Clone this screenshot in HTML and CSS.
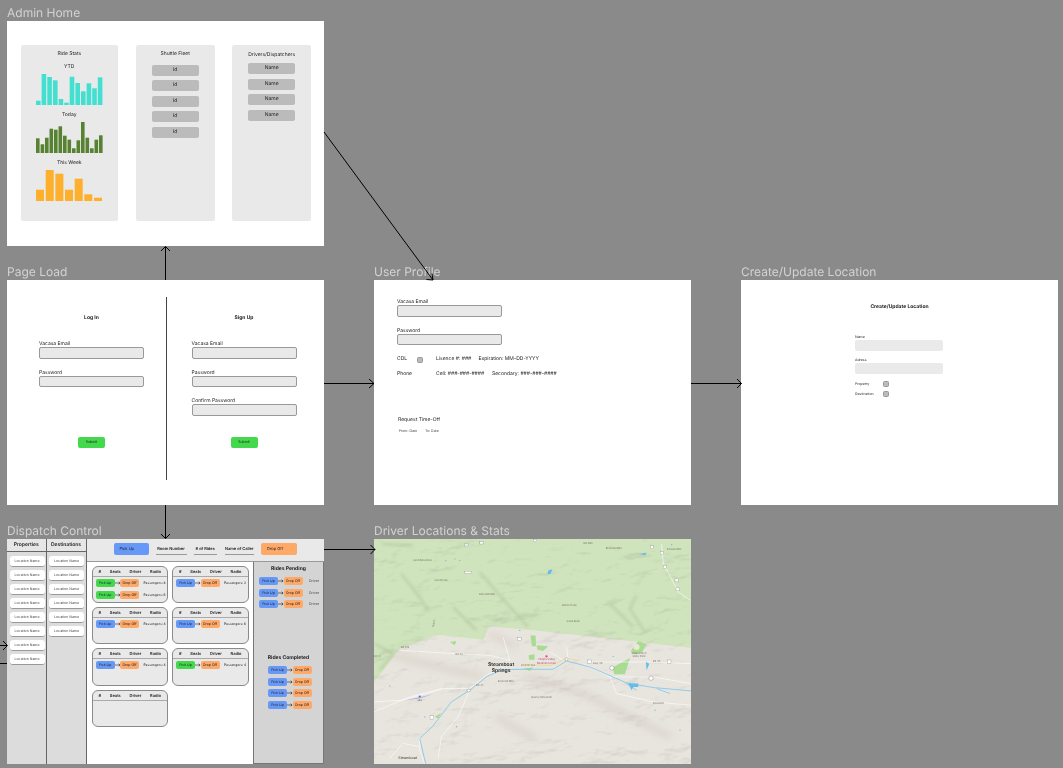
FILE: index.html
```html
<!DOCTYPE html>
<html lang="en">
<head>
    <meta charset="UTF-8">
    <meta name="viewport" content="width=device-width, initial-scale=1.0">
    <title>Shuttle Dispatch Wireframes</title>
    <link rel="stylesheet" href="styles.css">
</head>
<body>
    <svg class="defs" width="0" height="0">
        <symbol id="ride-arrow" viewBox="0 0 6 4">
            <path d="M0 2H5.6M4 .6L5.6 2L4 3.4" fill="none" stroke="#111" stroke-width=".6"/>
        </symbol>
    </svg>

    <!-- Admin Home -->
    <section class="board board-admin">
        <h2 class="board-title">Admin Home</h2>
        <div class="frame admin">
            <div class="panel panel-stats">
                <h3 class="panel-title">Ride Stats</h3>
                <p class="stat-label">YTD</p>
                <svg class="chart chart-ytd" viewBox="0 0 67 31">
                    <rect x="0" y="26.700" width="4.600" height="4.300"/><rect x="5.600" y="0" width="4.600" height="31"/><rect x="11.300" y="3" width="4.600" height="28"/><rect x="17" y="6.300" width="4.600" height="24.700"/><rect x="22.600" y="25" width="4.600" height="6"/><rect x="28.200" y="28.700" width="4.600" height="2.300"/><rect x="33.700" y="2.700" width="4.600" height="28.300"/><rect x="39.400" y="9" width="4.600" height="22"/><rect x="45" y="17.300" width="4.600" height="13.700"/><rect x="50.600" y="9.300" width="4.600" height="21.700"/><rect x="56.200" y="14.300" width="4.600" height="16.700"/><rect x="61.800" y="3.300" width="4.600" height="27.700"/>
                </svg>
                <p class="stat-label">Today</p>
                <svg class="chart chart-today" viewBox="0 0 67 31">
                    <rect x="0" y="16.300" width="3.600" height="14.700"/><rect x="4.600" y="22.300" width="3.600" height="8.700"/><rect x="9" y="15.700" width="3.600" height="15.300"/><rect x="13.500" y="6.700" width="3.600" height="24.300"/><rect x="18" y="7.700" width="3.600" height="23.300"/><rect x="22.500" y="4.300" width="3.600" height="26.700"/><rect x="27" y="13.700" width="3.600" height="17.300"/><rect x="31.500" y="17.700" width="3.600" height="13.300"/><rect x="36" y="26.300" width="3.600" height="4.700"/><rect x="40.500" y="18.300" width="3.600" height="12.700"/><rect x="45" y="0" width="3.600" height="31"/><rect x="49.500" y="15.700" width="3.600" height="15.300"/><rect x="54" y="26.300" width="3.600" height="4.700"/><rect x="58.500" y="17.700" width="3.600" height="13.300"/><rect x="63" y="13.300" width="3.600" height="17.700"/>
                </svg>
                <p class="stat-label">This Week</p>
                <svg class="chart chart-week" viewBox="0 0 67 31">
                    <rect x="0" y="19.700" width="8" height="11.300"/><rect x="9.700" y="0" width="8" height="31"/><rect x="19.400" y="3.700" width="8" height="27.300"/><rect x="29" y="19.700" width="8" height="11.300"/><rect x="38.700" y="8.700" width="8" height="22.300"/><rect x="48.300" y="24.300" width="8" height="6.700"/><rect x="58" y="27.700" width="8" height="3.300"/>
                </svg>
            </div>
            <div class="panel panel-fleet">
                <h3 class="panel-title">Shuttle Fleet</h3>
                <div class="chip-list fleet-list">
                    <span class="chip">Id</span>
                    <span class="chip">Id</span>
                    <span class="chip">Id</span>
                    <span class="chip">Id</span>
                    <span class="chip">Id</span>
                </div>
            </div>
            <div class="panel panel-drivers">
                <h3 class="panel-title">Drivers/Dispatchers</h3>
                <div class="chip-list">
                    <span class="chip">Name</span>
                    <span class="chip">Name</span>
                    <span class="chip">Name</span>
                    <span class="chip">Name</span>
                </div>
            </div>
        </div>
    </section>

    <!-- Page Load -->
    <section class="board board-load">
        <h2 class="board-title">Page Load</h2>
        <div class="frame auth">
            <div class="auth-col auth-login">
                <h3 class="form-title">Log In</h3>
                <label class="field-label">Vacasa Email</label>
                <div class="input"></div>
                <label class="field-label">Password</label>
                <div class="input"></div>
                <button class="submit">Submit</button>
            </div>
            <div class="auth-divider"></div>
            <div class="auth-col auth-signup">
                <h3 class="form-title">Sign Up</h3>
                <label class="field-label">Vacasa Email</label>
                <div class="input"></div>
                <label class="field-label">Password</label>
                <div class="input"></div>
                <label class="field-label">Confirm Password</label>
                <div class="input"></div>
                <button class="submit">Submit</button>
            </div>
        </div>
    </section>

    <!-- User Profile -->
    <section class="board board-profile">
        <h2 class="board-title">User Profile</h2>
        <div class="frame profile">
            <label class="field-label">Vacasa Email</label>
            <div class="input"></div>
            <label class="field-label">Password</label>
            <div class="input"></div>
            <div class="profile-row row-cdl">
                <span class="cell-cdl">CDL</span>
                <span class="checkbox"></span>
                <span class="cell-licence">Lisence #: ###</span>
                <span>Expiration: MM-DD-YYYY</span>
            </div>
            <div class="profile-row row-phone">
                <span class="cell-phone">Phone</span>
                <span class="cell-cell">Cell: ###-###-####</span>
                <span>Secondary: ###-###-####</span>
            </div>
            <p class="timeoff-title">Request Time-Off</p>
            <p class="timeoff-dates"><span>From: Date</span><span>To: Date</span></p>
        </div>
    </section>

    <!-- Create/Update Location -->
    <section class="board board-location">
        <h2 class="board-title">Create/Update Location</h2>
        <div class="frame location">
            <h3 class="form-title">Create/Update Location</h3>
            <div class="location-form">
                <label class="small-label">Name</label>
                <div class="input-plain"></div>
                <label class="small-label">Adress</label>
                <div class="input-plain"></div>
                <div class="check-row check-first"><span>Property</span><span class="checkbox"></span></div>
                <div class="check-row"><span>Destination</span><span class="checkbox"></span></div>
            </div>
        </div>
    </section>

    <!-- Dispatch Control -->
    <section class="board board-dispatch">
        <h2 class="board-title">Dispatch Control</h2>
        <div class="frame dispatch">
            <div class="loc-col">
                <h3 class="loc-head">Properties</h3>
                <div class="loc-list">
                    <span class="loc">Location Name</span>
                    <span class="loc">Location Name</span>
                    <span class="loc">Location Name</span>
                    <span class="loc">Location Name</span>
                    <span class="loc">Location Name</span>
                    <span class="loc">Location Name</span>
                    <span class="loc">Location Name</span>
                    <span class="loc">Location Name</span>
                </div>
            </div>
            <div class="loc-col loc-col-dest">
                <h3 class="loc-head">Destinations</h3>
                <div class="loc-list">
                    <span class="loc">Location Name</span>
                    <span class="loc">Location Name</span>
                    <span class="loc">Location Name</span>
                    <span class="loc">Location Name</span>
                    <span class="loc">Location Name</span>
                    <span class="loc">Location Name</span>
                </div>
            </div>
            <div class="dispatch-main">
                <div class="topbar">
                    <span class="btn-big btn-blue">Pick Up</span>
                    <span class="top-field field-room">Room Number</span>
                    <span class="top-field field-rides"># of Rides</span>
                    <span class="top-field field-caller">Name of Caller</span>
                    <span class="btn-big btn-orange">Drop Off</span>
                </div>
                <div class="dispatch-body">
                    <div class="cards">
                        <div class="card">
                            <div class="card-head"><span>#</span><span>Seats</span><span>Driver</span><span>Radio</span></div>
                            <div class="ride"><span class="pill pill-green">Pick Up</span><svg class="arrow"><use href="#ride-arrow"/></svg><span class="pill pill-orange">Drop Off</span><span class="ride-note">Passengers: 8</span></div>
                            <div class="ride"><span class="pill pill-green">Pick Up</span><svg class="arrow"><use href="#ride-arrow"/></svg><span class="pill pill-orange">Drop Off</span><span class="ride-note">Passengers: 6</span></div>
                        </div>
                        <div class="card">
                            <div class="card-head"><span>#</span><span>Seats</span><span>Driver</span><span>Radio</span></div>
                            <div class="ride"><span class="pill pill-blue">Pick Up</span><svg class="arrow"><use href="#ride-arrow"/></svg><span class="pill pill-orange">Drop Off</span><span class="ride-note">Passengers: 4</span></div>
                        </div>
                        <div class="card">
                            <div class="card-head"><span>#</span><span>Seats</span><span>Driver</span><span>Radio</span></div>
                            <div class="ride"><span class="pill pill-blue">Pick Up</span><svg class="arrow"><use href="#ride-arrow"/></svg><span class="pill pill-orange">Drop Off</span><span class="ride-note">Passengers: 4</span></div>
                        </div>
                        <div class="card">
                            <div class="card-head"><span>#</span><span>Seats</span><span>Driver</span><span>Radio</span></div>
                        </div>
                        <div class="card">
                            <div class="card-head"><span>#</span><span>Seats</span><span>Driver</span><span>Radio</span></div>
                            <div class="ride"><span class="pill pill-blue">Pick Up</span><svg class="arrow"><use href="#ride-arrow"/></svg><span class="pill pill-orange">Drop Off</span><span class="ride-note">Passengers: 2</span></div>
                        </div>
                        <div class="card">
                            <div class="card-head"><span>#</span><span>Seats</span><span>Driver</span><span>Radio</span></div>
                            <div class="ride"><span class="pill pill-blue">Pick Up</span><svg class="arrow"><use href="#ride-arrow"/></svg><span class="pill pill-orange">Drop Off</span><span class="ride-note">Passengers: 6</span></div>
                        </div>
                        <div class="card">
                            <div class="card-head"><span>#</span><span>Seats</span><span>Driver</span><span>Radio</span></div>
                            <div class="ride"><span class="pill pill-green">Pick Up</span><svg class="arrow"><use href="#ride-arrow"/></svg><span class="pill pill-orange">Drop Off</span><span class="ride-note">Passengers: 4</span></div>
                        </div>
                    </div>
                    <aside class="rides-side">
                        <h3 class="side-title">Rides Pending</h3>
                        <div class="side-list side-pending">
                            <div class="ride"><span class="pill pill-blue">Pick Up</span><svg class="arrow"><use href="#ride-arrow"/></svg><span class="pill pill-orange">Drop Off</span><span class="ride-driver">Driver</span></div>
                            <div class="ride"><span class="pill pill-blue">Pick Up</span><svg class="arrow"><use href="#ride-arrow"/></svg><span class="pill pill-orange">Drop Off</span><span class="ride-driver">Driver</span></div>
                            <div class="ride"><span class="pill pill-blue">Pick Up</span><svg class="arrow"><use href="#ride-arrow"/></svg><span class="pill pill-orange">Drop Off</span><span class="ride-driver">Driver</span></div>
                        </div>
                        <h3 class="side-title side-title-done">Rides Completed</h3>
                        <div class="side-list side-done">
                            <div class="ride"><span class="pill pill-blue">Pick Up</span><svg class="arrow"><use href="#ride-arrow"/></svg><span class="pill pill-orange">Drop Off</span></div>
                            <div class="ride"><span class="pill pill-blue">Pick Up</span><svg class="arrow"><use href="#ride-arrow"/></svg><span class="pill pill-orange">Drop Off</span></div>
                            <div class="ride"><span class="pill pill-blue">Pick Up</span><svg class="arrow"><use href="#ride-arrow"/></svg><span class="pill pill-orange">Drop Off</span></div>
                            <div class="ride"><span class="pill pill-blue">Pick Up</span><svg class="arrow"><use href="#ride-arrow"/></svg><span class="pill pill-orange">Drop Off</span></div>
                        </div>
                    </aside>
                </div>
            </div>
        </div>
    </section>

    <!-- Driver Locations & Stats -->
    <section class="board board-map">
        <h2 class="board-title">Driver Locations &amp; Stats</h2>
        <div class="frame map">
            <svg class="map-svg" viewBox="13 55 950 677" preserveAspectRatio="none">
                <defs>
                    <filter id="blur3"><feGaussianBlur stdDeviation="5"/></filter>
                    <filter id="blur8"><feGaussianBlur stdDeviation="12"/></filter>
                    <filter id="soft"><feGaussianBlur stdDeviation=".8"/></filter>
                    <filter id="hills" x="0" y="0" width="100%" height="100%">
                        <feTurbulence type="fractalNoise" baseFrequency="0.007 0.014" numOctaves="4" seed="7"/>
                        <feDiffuseLighting surfaceScale="14" lighting-color="#fff" diffuseConstant="1.2">
                            <feDistantLight azimuth="225" elevation="62"/>
                        </feDiffuseLighting>
                    </filter>
                </defs>
                <rect x="13" y="55" width="950" height="677" fill="#cfe3bd"/>
                <path d="M13 485L90 385L205 343L340 358L358 318L500 330L963 382V732H13Z" fill="#e8e4de"/>
                <rect class="map-hills" x="13" y="55" width="950" height="677" filter="url(#hills)"/>
                <g filter="url(#blur3)" fill="none" stroke="#b0c396" stroke-width="7" opacity=".6">
                    <path d="M330 155L390 225L475 320"/>
                    <path d="M95 160L150 230L175 270"/>
                    <path d="M40 70L130 75"/>
                    <path d="M800 225L780 265L825 335"/>
                    <path d="M250 260L320 330"/>
                    <path d="M15 370L70 400L30 450"/>
                    <path d="M720 250L790 320"/>
                </g>
                <g filter="url(#blur8)" fill="none" stroke="#c9c1b3" stroke-width="14" opacity=".55">
                    <path d="M70 405L250 450L340 470"/>
                    <path d="M470 470L640 520L780 590L900 650"/>
                    <path d="M360 340L440 380"/>
                    <path d="M380 590L500 660"/>
                </g>
                <g filter="url(#soft)">
                    <!-- parks -->
                    <g fill="#a9dc92">
                        <path d="M728 442L780 413L765 462L733 462Z"/>
                        <path d="M782 392L805 362L830 372L815 398L790 402Z"/>
                        <path d="M482 345H497L499 378H486Z"/>
                        <path d="M476 405L494 402L494 418L478 418Z"/>
                        <path d="M500 375L535 378L520 392L503 388Z"/>
                        <path d="M460 445L490 442L480 452Z"/>
                        <path d="M195 590L215 578L205 595Z"/>
                        <path d="M240 365L260 362L255 375Z"/>
                    </g>
                    <circle cx="800" cy="380" r="9" fill="#e8ead8"/>
                    <!-- roads -->
                    <g fill="none" stroke="#fff" stroke-width="1.800">
                        <path d="M13 575L120 530L220 505L300 505L350 465L400 440"/>
                        <path d="M300 510L265 590L215 650L205 715"/>
                        <path d="M90 390L260 400L360 405L420 420"/>
                        <path d="M650 425L840 425L963 430"/>
                        <path d="M640 430L720 470L850 470L963 490"/>
                        <path d="M720 470L740 520L850 545L963 555"/>
                        <path d="M15 545L100 540L220 505"/>
                        <path d="M150 650L150 690L165 732"/>
                        <path d="M60 715L100 670L150 680"/>
                        <path d="M875 70L880 130L905 175L925 215L963 240"/>
                        <path d="M400 350L420 420M590 380L595 420M540 395L580 420"/>
                    </g>
                    <path d="M455 432L540 436L590 415L630 420" fill="none" stroke="#f2d88c" stroke-width="2.500"/>
                    <!-- water -->
                    <g fill="none" stroke="#7cc8ee" stroke-width="2.500">
                        <path d="M168 732L150 655L188 620L245 545L300 510L352 468L400 448L470 447L550 447L590 422L660 440L770 488L850 502L963 512"/>
                        <path d="M770 490L800 510M860 505L900 520"/>
                    </g>
                    <g fill="#62bcec">
                        <path d="M535 150L548 146L542 160L533 160Z"/>
                        <path d="M775 490H805V500H790L785 510Z"/>
                        <path d="M808 100L830 96L826 104Z"/>
                        <path d="M828 425L838 430L830 450Z"/>
                        <circle cx="255" cy="115" r="2"/><circle cx="270" cy="120" r="2"/><circle cx="228" cy="120" r="2"/><circle cx="60" cy="497" r="2"/><circle cx="165" cy="590" r="2"/><circle cx="260" cy="620" r="2"/><circle cx="730" cy="408" r="2"/><circle cx="855" cy="570" r="2"/><circle cx="930" cy="630" r="2"/><circle cx="450" cy="330" r="2"/><circle cx="905" cy="72" r="2"/>
                    </g>
                    <path d="M100 542L190 522L148 535Z" fill="#a9b1de"/>
                    <circle cx="150" cy="529" r="3" fill="#5566cc"/>
                    <circle cx="530" cy="408" r="3.500" fill="#d9457e"/>
                    <circle cx="726" cy="443" r="6.500" fill="#fff" stroke="#777" stroke-width="1.200"/>
                    <circle cx="843" cy="474" r="6.500" fill="#fff" stroke="#777" stroke-width="1.200"/>
                    <circle cx="590" cy="417" r="4.500" fill="#fff" stroke="#777" stroke-width="1.200"/>
                    <circle cx="297" cy="511" r="4.500" fill="#fff" stroke="#777" stroke-width="1.200"/>
                    <g fill="#fff" stroke="#888" stroke-width="1">
                        <rect x="284" y="70" width="11" height="6"/><rect x="330" y="63" width="10" height="7"/><rect x="284" y="152" width="20" height="7"/>
                        <rect x="490" y="56" width="10" height="7"/><rect x="841" y="75" width="9" height="9"/><rect x="871" y="93" width="9" height="9"/>
                        <rect x="880" y="135" width="9" height="9"/><rect x="915" y="175" width="10" height="9"/><rect x="918" y="202" width="10" height="9"/>
                        <rect x="443" y="352" width="11" height="9"/><rect x="653" y="419" width="11" height="10"/><rect x="892" y="419" width="11" height="10"/><rect x="181" y="587" width="11" height="10"/>
                    </g>
                </g>
                <g class="map-labels">
                    <text x="158" y="120">Sand Mountain</text>
                    <text x="214" y="181">Sand Peak</text>
                    <text x="352" y="225">Emerald Mtn</text>
                    <text x="598" y="256">Hahns Peak</text>
                    <text x="610" y="305">Sand Peak</text>
                    <text x="655" y="70">Elk Mtn</text>
                    <text x="732" y="86">Blacktail Mtn</text>
                    <text x="912" y="88">Farwell Mtn</text>
                    <text x="106" y="384">Rd 129</text>
                    <text x="268" y="405">Rd 42</text>
                    <text x="22" y="410">Rd 33</text>
                    <text x="683" y="430">Hwy 40</text>
                    <text x="860" y="424">Rd 44</text>
                    <text x="330" y="496">Rd 33</text>
                    <text x="195" y="308" transform="rotate(-80 195 308)">Rd 52</text>
                    <text x="408" y="486">Emerald Mtn</text>
                    <text x="515" y="533">Quarry Mountain</text>
                    <text x="150" y="543">SBS</text>
                    <text x="865" y="550">Routt Rd</text>
                    <text x="807" y="402">Stagecoach</text>
                    <text x="807" y="410">State Park</text>
                    <text x="475" y="437">Lincoln Ave</text>
                    <text class="map-poi" x="530" y="420">Yampa Valley</text>
                    <text class="map-poi" x="530" y="430">Medical Center</text>
                    <text class="map-town" x="394" y="438">Steamboat</text>
                    <text class="map-town" x="394" y="456">Springs</text>
                    <text class="map-town-small" x="114" y="717">Steamboat</text>
                </g>
            </svg>
        </div>
    </section>

    <!-- connectors between the boards -->
    <svg class="flows" viewBox="0 0 1063 768" width="1063" height="768">
        <g fill="none" stroke="#000" stroke-width="1">
            <path d="M165.500 280V247M161 251L165.500 246.500L170 251"/>
            <path d="M165.500 505V538M161 534L165.500 538.500L170 534"/>
            <path d="M324 132L433 280M426.500 279.500L433 280L432 273.500"/>
            <path d="M324 383.500H374M369 379L374 383.500L369 388"/>
            <path d="M691 383.500H741.500M737 379L741.500 383.500L737 388"/>
            <path d="M324 549.500H375M370.500 545L375 549.500L370.500 554"/>
            <path d="M0 645.500H7M3 641L7.500 645.500L3 650"/>
            <path d="M0 663.500H7"/>
        </g>
    </svg>
</body>
</html>
```

FILE: styles.css
```css
* {
    margin: 0;
    padding: 0;
    box-sizing: border-box;
}

body {
    font-family: Inter, "Liberation Sans", sans-serif;
    background-color: #8a8a8a;
    color: #222;
    width: 1063px;
    height: 768px;
    position: relative;
    overflow: hidden;
    text-rendering: geometricPrecision;
}

.defs {
    position: absolute;
}

/* boards sit on a free canvas */
.board {
    position: absolute;
    width: 317px;
}

.board-admin { left: 7px; top: 4px; }
.board-load { left: 7px; top: 263px; }
.board-profile { left: 374px; top: 263px; }
.board-location { left: 741px; top: 263px; }
.board-dispatch { left: 7px; top: 522px; }
.board-map { left: 374px; top: 522px; }

.board-title {
    height: 17px;
    line-height: 17px;
    font-size: 12px;
    font-weight: 400;
    color: #d2d2d2;
    white-space: nowrap;
}

.frame {
    height: 225px;
    background-color: #fff;
}

.flows {
    position: absolute;
    left: 0;
    top: 0;
    pointer-events: none;
}

/* admin home */
.admin {
    display: flex;
    gap: 17.700px;
    padding: 24px 0 0 13.500px;
}

.panel {
    height: 176px;
    background-color: #e9e9e9;
    border-radius: 2px;
    display: flex;
    flex-direction: column;
    align-items: center;
}

.panel-stats { width: 97.500px; }
.panel-fleet { width: 79px; }
.panel-drivers { width: 78.500px; }

.panel-title {
    margin-top: 6px;
    height: 6px;
    line-height: 6px;
    font-size: 5px;
    font-weight: 400;
    white-space: nowrap;
}

.panel-drivers .panel-title { margin-top: 6.500px; }

.stat-label {
    margin-top: 7px;
    height: 6px;
    line-height: 6px;
    font-size: 5px;
}

.chart {
    display: block;
    margin-top: 4px;
    width: 67px;
    height: 31px;
}

.chart-ytd rect { fill: #43e0d2; }
.chart-today rect { fill: #568232; }
.chart-week rect { fill: #feb02c; }

.chip-list {
    margin-top: 5.500px;
    display: flex;
    flex-direction: column;
    gap: 4.500px;
}

.fleet-list { margin-top: 7.500px; }

.chip {
    width: 47px;
    height: 11px;
    line-height: 11px;
    text-align: center;
    font-size: 5px;
    background-color: #bbb;
    border-radius: 2px;
}

/* forms */
.form-title {
    font-size: 5px;
    line-height: 6px;
    font-weight: 700;
    text-align: center;
}

.field-label {
    display: block;
    font-size: 5px;
    line-height: 6px;
    white-space: nowrap;
}

.input {
    width: 105px;
    height: 11.500px;
    margin-bottom: 11px;
    background-color: #e9e9e9;
    border: 1px solid #999;
    border-radius: 2px;
}

.submit {
    display: block;
    width: 27px;
    height: 10.500px;
    margin: auto auto 0;
    border: none;
    border-radius: 2px;
    background-color: #44d94d;
    color: #222;
    font-family: inherit;
    font-size: 3.500px;
}

.auth {
    display: flex;
}

.auth-col {
    width: 105px;
    height: 132.500px;
    margin-top: 35px;
    display: flex;
    flex-direction: column;
}

.auth-col .form-title { margin-bottom: 20px; }

.auth-login { margin-left: 32px; margin-right: 22px; }
.auth-signup { margin-left: 24.500px; }

.auth-divider {
    width: 1px;
    height: 183px;
    margin-top: 17px;
    background-color: #444;
}

.profile {
    padding: 19px 0 0 23px;
}

.profile-row {
    display: flex;
    align-items: center;
    font-size: 5px;
    line-height: 7px;
    white-space: nowrap;
}

.row-cdl { margin-top: 1px; height: 7px; }
.row-phone { margin-top: 7.500px; }

.cell-cdl { width: 20px; }
.cell-licence { width: 42.500px; margin-left: 13px; }
.cell-phone { width: 39px; }
.cell-cell { width: 56px; }

.checkbox {
    width: 6px;
    height: 6px;
    background-color: #bbb;
    border: 1px solid #999;
    border-radius: 1.500px;
}

.timeoff-title {
    margin: 39px 0 0 1px;
    font-size: 5px;
    line-height: 6px;
}

.timeoff-dates {
    margin: 6px 0 0 2px;
    display: flex;
    gap: 8px;
    font-size: 3.500px;
    line-height: 5px;
    color: #444;
}

.location {
    padding-top: 24px;
}

.location-form {
    margin: 25px 0 0 114px;
    width: 88px;
}

.small-label {
    display: block;
    font-size: 3.500px;
    line-height: 4px;
    margin-bottom: .500px;
}

.input-plain {
    height: 11px;
    margin-bottom: 7.500px;
    background-color: #eaeaea;
    border-radius: 2px;
}

.check-row {
    display: flex;
    align-items: center;
    height: 6px;
    margin-top: 3.500px;
    font-size: 3.500px;
}

.check-first { margin-top: 0; }

.check-row span:first-child {
    width: 28px;
}

/* dispatch control */
.dispatch {
    display: flex;
    overflow: hidden;
}

.loc-col {
    width: 39.500px;
    height: 100%;
    background-color: #dcdcdc;
    border-right: 1px solid #666;
}

.loc-col-dest {
    width: 40px;
}

.loc-head {
    height: 13px;
    line-height: 12px;
    font-size: 5px;
    font-weight: 600;
    text-align: center;
    background-color: #e6e6e6;
    border-bottom: 1px solid #666;
}

.loc-list {
    padding: 3.500px 0 0 2.500px;
    display: flex;
    flex-direction: column;
    gap: 3.100px;
}

.loc {
    width: 35px;
    height: 11px;
    line-height: 10px;
    text-align: center;
    font-size: 3.500px;
    color: #444;
    background-color: #fff;
    border-radius: 3px;
    border-bottom: 1px solid #999;
    white-space: nowrap;
}

.dispatch-main {
    flex: 1;
    display: flex;
    flex-direction: column;
    min-width: 0;
}

.topbar {
    height: 23px;
    flex: none;
    display: flex;
    align-items: center;
    padding-left: 27px;
    background-color: #e9e9e9;
    border-bottom: 1px solid #999;
    font-size: 4px;
    white-space: nowrap;
}

.btn-big {
    width: 35.500px;
    height: 12px;
    line-height: 12px;
    padding-left: 6px;
    border-radius: 2px;
    margin-top: -2px;
}

.btn-blue { background-color: #6699f7; }
.btn-orange { background-color: #ffa969; }

.top-field {
    height: 11px;
    line-height: 9px;
    margin-top: -1px;
    font-weight: 600;
    text-align: center;
    border-bottom: 1px solid #999;
}

.field-room { width: 31px; margin: -1px 7.500px 0 6.500px; }
.field-rides { width: 22.500px; margin-right: 8px; }
.field-caller { width: 29.500px; margin-right: 7px; }

.dispatch-body {
    flex: 1;
    display: flex;
    min-height: 0;
}

.cards {
    flex: 1;
    display: grid;
    grid-template-columns: 76.500px 76.500px;
    grid-template-rows: repeat(4, 37.200px);
    grid-auto-flow: column;
    column-gap: 4px;
    row-gap: 4px;
    padding: 4px 0 0 5px;
    align-content: start;
}

.card {
    background-color: #e9e9e9;
    border: 1px solid #8a8a8a;
    border-radius: 6px;
}

.card-head {
    height: 10px;
    padding: 0 6px;
    line-height: 9px;
    display: flex;
    justify-content: space-between;
    font-size: 4px;
    font-weight: 600;
    border-bottom: 1px solid #aaa;
    margin-bottom: 2px;
}

.ride {
    display: flex;
    align-items: center;
    height: 8px;
    margin-bottom: 3.500px;
    padding-left: 3px;
    font-size: 3.500px;
    white-space: nowrap;
}

.pill {
    width: 19px;
    height: 8px;
    line-height: 8px;
    text-align: center;
    border-radius: 2px;
    flex: none;
}

.pill-blue { background-color: #6699f7; }
.pill-green { background-color: #44d94d; }
.pill-orange { background-color: #ffa969; }

.arrow {
    width: 5.500px;
    height: 4px;
    flex: none;
}

.ride-note {
    margin-left: 4.500px;
    font-size: 3.300px;
}

.rides-side {
    width: 71px;
    flex: none;
    background-color: #d4d4d4;
    border-left: 1px solid #777;
    border-right: 1px solid #777;
    border-bottom: 1px solid #777;
}

.side-title {
    margin-top: 4px;
    font-size: 5px;
    line-height: 7px;
    font-weight: 700;
    text-align: center;
}

.side-title-done {
    margin-top: 0;
}

.side-pending {
    height: 82px;
    padding: 4px 0 0 2px;
}

.side-done {
    padding: 4px 0 0 11px;
}

.ride-driver {
    margin-left: 6.500px;
    color: #444;
}

/* map */
.map {
    background-color: #cfe3bd;
}

.map-svg {
    display: block;
    width: 100%;
    height: 100%;
}

.map-hills {
    mix-blend-mode: multiply;
    opacity: .42;
}

.map-labels text {
    font-size: 8px;
    fill: #7a7165;
    text-anchor: middle;
}

.map-labels .map-poi { fill: #b73f6e; }

.map-labels .map-town {
    font-size: 15px;
    font-weight: 600;
    fill: #222;
}

.map-labels .map-town-small {
    font-size: 11px;
    fill: #444;
}
```
